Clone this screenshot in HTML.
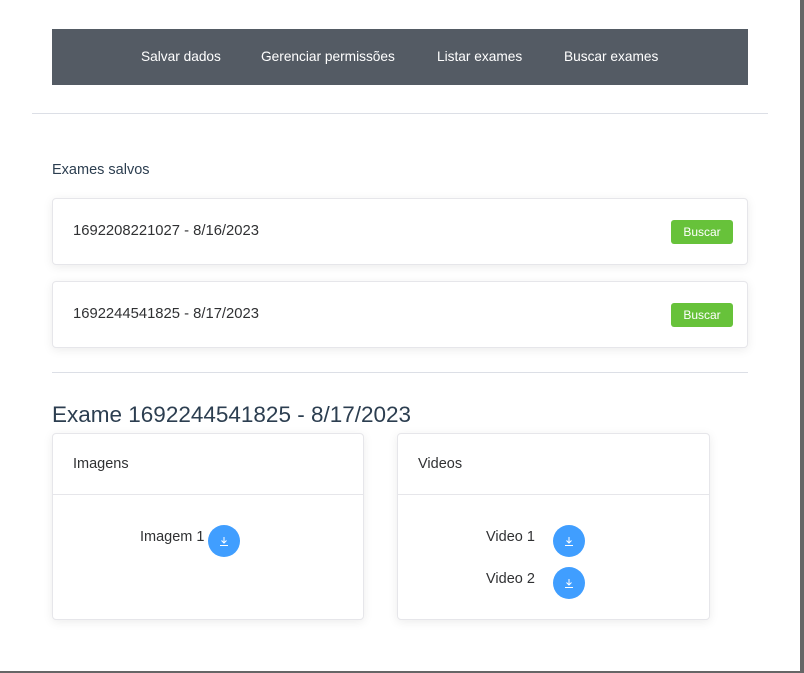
<!DOCTYPE html><html><head><style>
body{margin:0;width:804px;height:673px;background:#fff;font-family:"Liberation Sans",sans-serif;color:#2c3e50;position:relative;overflow:hidden}
.a{position:absolute}
.nav{left:52px;top:29px;width:696px;height:56px;background:#545b64;color:#fff;font-size:13.7px}
.nav span{position:absolute;top:20px}
.card{background:#fff;border:1px solid #e6e6ea;border-radius:4px;box-shadow:0 2px 10px rgba(0,0,0,.08)}
.btn{background:#67c23a;color:#fff;font-size:12px;border-radius:3px;width:62px;height:24px;line-height:24px;text-align:center}
.dl{width:32px;height:32px;border-radius:50%;background:#409eff}
.dl svg{position:absolute;left:10px;top:10px}
.t{font-size:14.5px;color:#303133}
.c{font-size:14.8px;color:#303133}
</style></head><body>
<div class="a nav"><span style="left:89px">Salvar dados</span><span style="left:209px">Gerenciar permissões</span><span style="left:385px">Listar exames</span><span style="left:512px">Buscar exames</span></div>
<div class="a" style="left:32px;top:113px;width:736px;height:1px;background:#dcdfe6"></div>
<div class="a" style="left:52px;top:162px;font-size:14.5px">Exames salvos</div>
<div class="a card" style="left:52px;top:198px;width:694px;height:65px"></div>
<div class="a c" style="left:73px;top:223px">1692208221027 - 8/16/2023</div>
<div class="a btn" style="left:671px;top:220px">Buscar</div>
<div class="a card" style="left:52px;top:281px;width:694px;height:65px"></div>
<div class="a c" style="left:73px;top:306px">1692244541825 - 8/17/2023</div>
<div class="a btn" style="left:671px;top:303px">Buscar</div>
<div class="a" style="left:52px;top:372px;width:696px;height:1px;background:#dcdfe6"></div>
<div class="a" style="left:52px;top:402px;font-size:22.5px">Exame 1692244541825 - 8/17/2023</div>
<div class="a card" style="left:52px;top:433px;width:310px;height:185px"></div>
<div class="a" style="left:53px;top:494px;width:310px;height:1px;background:#e6e6ea"></div>
<div class="a t" style="left:73px;top:456px">Imagens</div>
<div class="a t" style="left:140px;top:529px">Imagem 1</div>
<div class="a dl" style="left:208px;top:525px"><svg width="12" height="12" viewBox="0 0 12 12"><path d="M6 2v6M3.5 5.5L6 8l2.5-2.5M2 10.5h8" stroke="#fff" stroke-width="1" fill="none"/></svg></div>
<div class="a card" style="left:397px;top:433px;width:311px;height:185px"></div>
<div class="a" style="left:398px;top:494px;width:311px;height:1px;background:#e6e6ea"></div>
<div class="a t" style="left:418px;top:456px">Videos</div>
<div class="a t" style="left:486px;top:529px">Video 1</div>
<div class="a dl" style="left:553px;top:525px"><svg width="12" height="12" viewBox="0 0 12 12"><path d="M6 2v6M3.5 5.5L6 8l2.5-2.5M2 10.5h8" stroke="#fff" stroke-width="1" fill="none"/></svg></div>
<div class="a t" style="left:486px;top:571px">Video 2</div>
<div class="a dl" style="left:553px;top:567px"><svg width="12" height="12" viewBox="0 0 12 12"><path d="M6 2v6M3.5 5.5L6 8l2.5-2.5M2 10.5h8" stroke="#fff" stroke-width="1" fill="none"/></svg></div>
<div class="a" style="left:800px;top:0;width:4px;height:673px;background:#666"></div>
<div class="a" style="left:0;top:671px;width:804px;height:2px;background:#666"></div>
</body></html>
